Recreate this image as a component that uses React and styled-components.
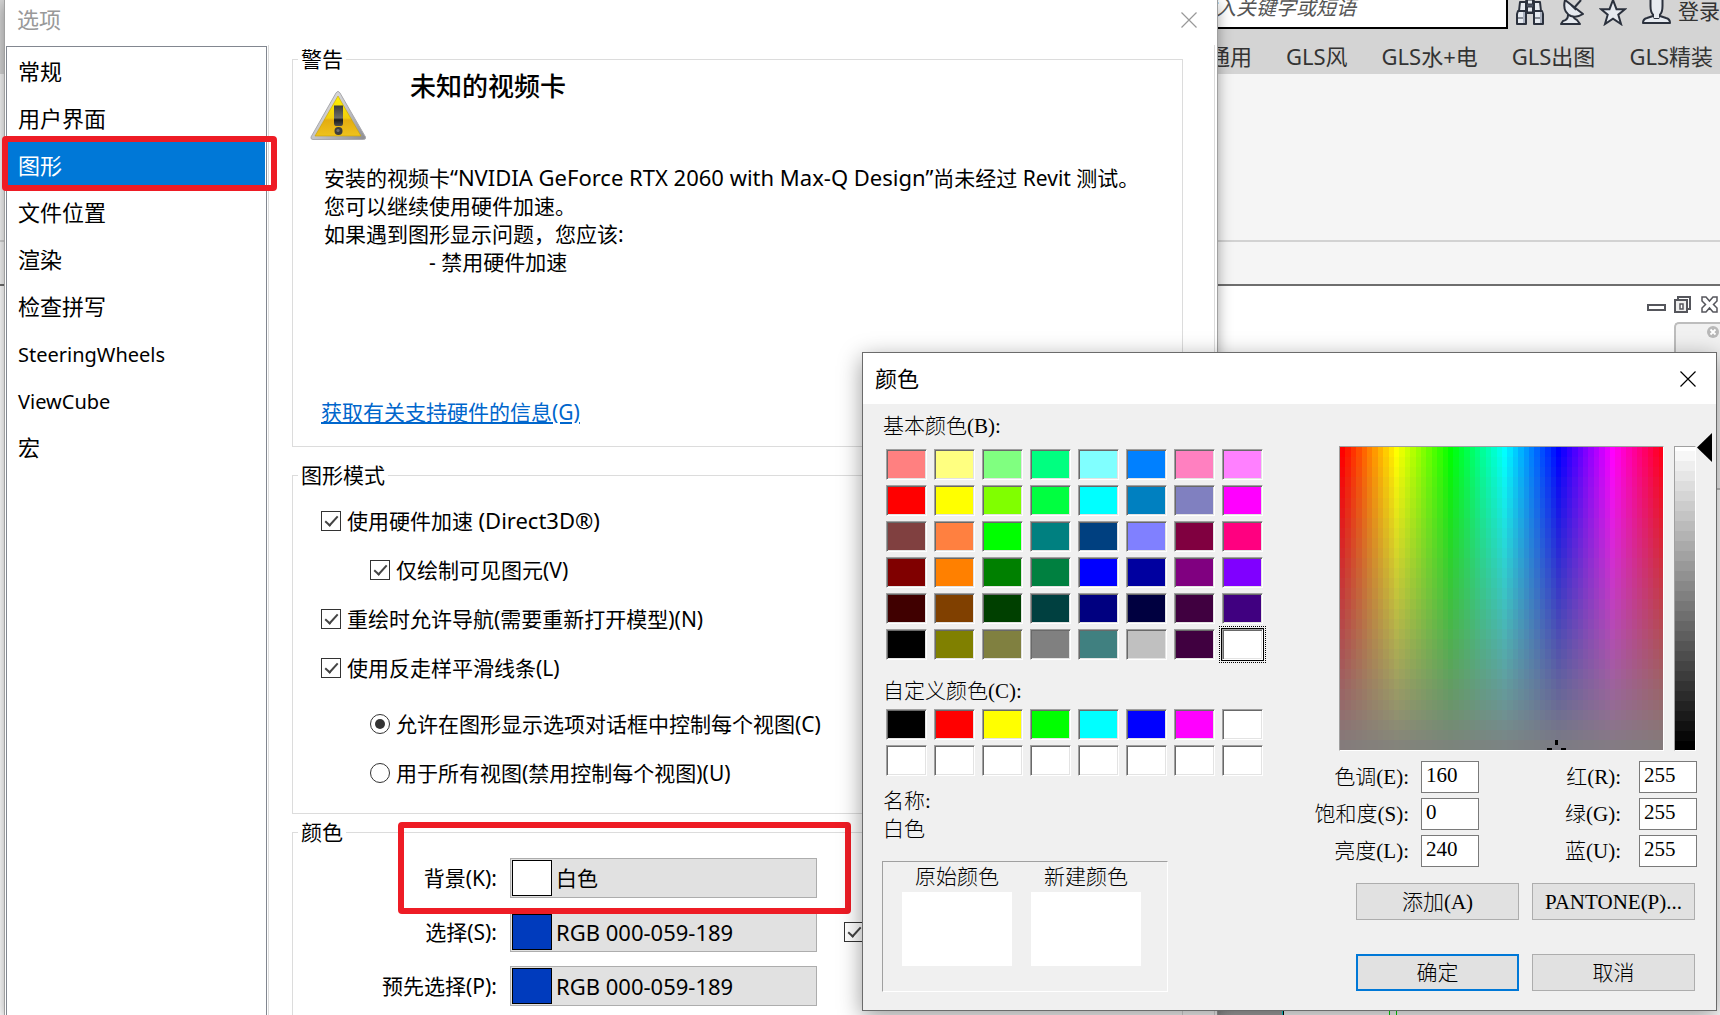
import React, { useState } from "react";
import styled, { createGlobalStyle, css } from "styled-components";

const sans = `"Noto Sans", "Noto Sans CJK SC", sans-serif`;
const serif = `"Liberation Serif", "Noto Sans CJK SC", serif`;

const GlobalStyle = createGlobalStyle`
  *, *::before, *::after { box-sizing: border-box; }
  body { margin: 0; font-family: ${sans}; font-size: 21px; line-height: 28px; color: #000; }
  button, input { font: inherit; color: inherit; margin: 0; padding: 0; }
`;

const Desktop = styled.div`
  position: relative;
  display: flex;
  flex-direction: column;
  height: 100vh;
  overflow: hidden;
  background: #fff;
`;

/* ---------- host application behind the dialogs ---------- */

const TitleStrip = styled.header`
  display: flex;
  flex-direction: column;
  height: 74px;
  background: #d4d4d4;
  color: #333;
`;

const SearchRow = styled.div`
  display: flex;
  justify-content: flex-end;
  align-items: flex-start;
  height: 42px;
  gap: 7px;
`;

const SearchBox = styled.input`
  width: 312px;
  height: 29px;
  padding: 0 0 12px;
  border: solid #000;
  border-width: 0 2px 2px 0;
  background: #fff;
  font-size: 20px;
  font-style: italic;
  &::placeholder { color: #555; opacity: 1; }
`;

const IconBar = styled.div`
  display: flex;
  gap: 14px;
  height: 26px;
`;

const IconButton = styled.button`
  display: flex;
  border: 0;
  background: none;
`;

const SignIn = styled.button`
  height: 22px;
  width: 42px;
  border: 0;
  background: none;
  line-height: 20px;
  white-space: nowrap;
`;

const Tabs = styled.nav`
  display: flex;
  justify-content: flex-end;
  gap: 34px;
  padding-right: 7px;
  font-size: 22px;
  a { color: inherit; text-decoration: none; white-space: nowrap; }
`;

const Ribbon = styled.div`
  height: 168px;
  background: #f5f5f5;
  border-bottom: 2px solid #d2d2d2;
`;

const OptionsBar = styled.div`
  height: 44px;
  background: #f5f5f5;
  border-bottom: 2px solid #6e6e6e;
`;

const ViewArea = styled.main`
  flex: 1;
  display: flex;
  flex-direction: column;
  align-items: flex-end;
`;

const ViewControls = styled.div`
  display: flex;
  align-items: center;
  gap: 6px;
  padding: 8px 2px 8px 0;
`;

const NavPanel = styled.aside`
  display: flex;
  flex-direction: column;
  align-items: flex-end;
  width: 46px;
  height: 168px;
  padding: 2px 1px;
  border: 2px solid #bdbdbd;
  border-right: 0;
  border-radius: 5px 0 0 5px;
  background: #f1f1f1;
`;

const NavHandle = styled.span`
  width: 18px;
  height: 3px;
  margin: 14px 11px 0 0;
  background: #9a9a9a;
`;

const ModelStrip = styled.div`
  display: flex;
  align-self: stretch;
  height: 8px;
  margin-top: auto;
  padding-left: 1217px;
`;

const ModelPart = styled.span`
  width: ${(p) => p.$w}px;
  background: ${(p) => p.$color};
`;

/* ---------- shared parts ---------- */

const CloseButton = styled.button`
  display: flex;
  align-items: center;
  justify-content: center;
  width: 32px;
  height: 32px;
  border: 0;
  background: none;
  color: ${(p) => p.$color};
`;

const Annotation = styled.span`
  position: absolute;
  z-index: 1;
  border: 6px solid #ee1c25;
  border-radius: 4px;
  pointer-events: none;
`;

const Latin = styled.span`
  font-size: 22px;
  line-height: 22px;
`;

/* ---------- options window ---------- */

const OptionsWindow = styled.section`
  position: absolute;
  top: 0;
  bottom: 0;
  left: 5px;
  right: 503px;
  display: flex;
  flex-direction: column;
  background: #fff;
  box-shadow: 0 0 0 1px #a0a0a0, 0 4px 14px rgba(0, 0, 0, 0.4);
`;

const OptionsHeader = styled.header`
  display: flex;
  align-items: center;
  justify-content: space-between;
  height: 45px;
  padding: 0 12px 6px;
  h1 { margin: 0; padding-bottom: 2px; font-size: 22px; font-weight: 400; color: #999; }
`;

const OptionsBody = styled.div`
  flex: 1;
  min-height: 0;
  display: flex;
  padding: 0 2px 0 1px;
`;

const Categories = styled.ul`
  flex: none;
  width: 261px;
  margin: 1px 1px 0 0;
  padding: 1px;
  list-style: none;
  border: 1px solid #828790;
  border-bottom: 0;
  font-size: 22px;
`;

const Category = styled.li`
  position: relative;
`;

const CategoryButton = styled.button`
  width: 100%;
  height: 47px;
  padding: ${(p) => (p.$latin ? "2px 0 0 10px" : "0 0 2px 10px")};
  border: 0;
  text-align: left;
  font-size: ${(p) => (p.$latin ? "20px" : "22px")};
  background: ${(p) => (p.$active ? "#0078d7" : "transparent")};
  color: ${(p) => (p.$active ? "#fff" : "#000")};
`;

const CategoryMark = styled(Annotation)`
  inset: -6px -12px -2px -6px;
`;

const Panel = styled.div`
  flex: 1;
  min-width: 0;
  display: flex;
  flex-direction: column;
  overflow: hidden;
  padding: 0 31px 0 23px;
  border: solid #dcdcdc;
  border-width: 0 1px;
`;

const Group = styled.fieldset`
  min-width: 0;
  margin: 0 0 ${(p) => p.$after || 0}px;
  padding: 0;
  border: 1px solid #dcdcdc;
  legend { margin-left: 5px; padding: 0 3px; height: 28px; }
`;

const WarningHead = styled.div`
  display: flex;
  align-items: flex-start;
  gap: 43px;
  height: 91px;
  padding-left: 17px;
  svg { margin-top: 17px; }
  h2 {
    margin: 1px 0 0;
    font-family: ${serif};
    font-size: 26px;
    font-weight: 500;
    line-height: 28px;
  }
`;

const WarningText = styled.div`
  padding-left: 31px;
  p { margin: 0; }
  p:last-child { padding-left: 105px; }
`;

const HelpLink = styled.a`
  display: inline-block;
  margin: 122px 0 20px 28px;
  color: #0066cc;
  text-underline-offset: 2px;
`;

const Choices = styled.div`
  display: flex;
  flex-direction: column;
  gap: 21px;
  padding: 18px 0 26px 28px;
`;

const Choice = styled.label`
  display: flex;
  align-items: center;
  gap: 6px;
  padding-left: ${(p) => (p.$nested ? 49 : 0)}px;
  margin-top: ${(p) => (p.$spaced ? 7 : 0)}px;
`;

const mark = css`
  appearance: none;
  flex: none;
  display: flex;
  align-items: center;
  justify-content: center;
  width: 20px;
  height: 20px;
  border: 1px solid #333;
  background: #fff;
`;

const CheckBox = styled.input.attrs({ type: "checkbox" })`
  ${mark}
  &:checked::after {
    content: "";
    width: 7px;
    height: 13px;
    margin-top: -4px;
    border: solid #444;
    border-width: 0 2px 2px 0;
    transform: rotate(42deg);
  }
`;

const Radio = styled.input.attrs({ type: "radio" })`
  ${mark}
  border-radius: 50%;
  &:checked::after {
    content: "";
    width: 10px;
    height: 10px;
    border-radius: 50%;
    background: #333;
  }
`;

const ColorRows = styled.div`
  display: flex;
  flex-direction: column;
  gap: 14px;
  padding: 12px 0;
`;

const ColorRow = styled.div`
  position: relative;
  display: grid;
  grid-template-columns: 204px 307px 20px;
  align-items: center;
  column-gap: 13px;
  label { text-align: right; }
  input { margin-left: 14px; }
`;

const ColorButton = styled.button`
  display: flex;
  align-items: center;
  gap: 4px;
  height: 40px;
  padding: 0 1px;
  border: 1px solid #adadad;
  background: #e1e1e1;
`;

const Chip = styled.span`
  width: 40px;
  height: 36px;
  border: 1px solid #000;
  background: ${(p) => p.$color};
`;

const RowMark = styled(Annotation)`
  top: -36px;
  bottom: -16px;
  left: 105px;
  width: 453px;
`;

/* ---------- colour dialog ---------- */

const ColorDialog = styled.section`
  position: absolute;
  top: 352px;
  right: 3px;
  z-index: 2;
  width: 855px;
  border: 1px solid #6b6b6b;
  background: #f0f0f0;
  box-shadow: 0 6px 22px rgba(0, 0, 0, 0.4);
  font-family: ${serif};
  font-weight: 300;
`;

const DialogHeader = styled.header`
  display: flex;
  align-items: center;
  justify-content: space-between;
  height: 51px;
  padding: 0 12px;
  background: #fff;
  font-family: ${sans};
  h1 { margin: 0; padding-bottom: 2px; font-size: 22px; font-weight: 400; }
`;

const DialogBody = styled.form`
  display: flex;
  justify-content: space-between;
  padding: 8px 4px 18px 19px;
`;

const PaletteColumn = styled.div`
  display: flex;
  flex-direction: column;
`;

const Caption = styled.h2`
  margin: 0;
  padding-left: 1px;
  font-size: 21px;
  font-weight: 300;
  line-height: 28px;
`;

const Palette = styled.div`
  display: grid;
  grid-template-columns: repeat(8, 41px);
  grid-auto-rows: 31px;
  gap: 5px 7px;
  margin: ${(p) => p.$before}px 0 ${(p) => p.$after}px 4px;
`;

const Swatch = styled.button`
  position: relative;
  border: 1px solid;
  border-color: #a0a0a0 #fff #fff #a0a0a0;
  background: ${(p) => p.$color};
  box-shadow: inset 1px 1px #696969, inset -1px -1px #e3e3e3
    ${(p) => (p.$selected ? ", 0 0 0 1px #000" : "")};
  outline: ${(p) => (p.$selected ? "1px dotted #000" : "none")};
  outline-offset: 2px;
`;

const ColorName = styled.p`
  margin: 0;
  padding-left: 1px;
`;

const Preview = styled.div`
  display: flex;
  gap: 19px;
  width: 286px;
  height: 131px;
  margin-top: 18px;
  padding: 1px 19px;
  border: 1px solid;
  border-color: #a0a0a0 #fff #fff #a0a0a0;
`;

const Sample = styled.figure`
  width: 110px;
  margin: 0;
  text-align: center;
`;

const SampleFill = styled.div`
  height: 74px;
  margin-top: 1px;
  background: #fff;
`;

const MixColumn = styled.div`
  display: flex;
  flex-direction: column;
  align-items: flex-end;
  padding-top: 34px;
`;

const Spectrum = styled.div`
  display: flex;
  align-items: flex-start;
`;

const Sunken = styled.div`
  height: 305px;
  width: ${(p) => p.$w}px;
  margin-right: ${(p) => p.$after}px;
  border: 1px solid;
  border-color: #a0a0a0 #fff #fff #a0a0a0;
  svg { display: block; width: 100%; height: 100%; }
`;

const Arrow = styled.svg`
  margin-top: -13px;
`;

const Fields = styled.div`
  display: grid;
  grid-template-columns: auto 58px 144px 58px;
  gap: 5px 8px;
  align-items: center;
  margin: 10px 15px 0 0;
`;

const FieldLabel = styled.label`
  padding-right: ${(p) => (p.$wide ? 10 : 4)}px;
  text-align: right;
`;

const Field = styled.input.attrs({ type: "text" })`
  width: 58px;
  height: 32px;
  padding: 0 4px 4px;
  border: 1px solid #7a7a7a;
  background: #fff;
`;

const Buttons = styled.div`
  display: grid;
  grid-template-columns: 163px 163px;
  gap: 34px 13px;
  margin: 16px 17px 0 0;
`;

const PushButton = styled.button`
  height: 37px;
  border: ${(p) => (p.$primary ? "2px solid #0078d7" : "1px solid #adadad")};
  background: #e1e1e1;
  white-space: nowrap;
`;

/* ---------- drawings ---------- */

const Cross = () => (
  <svg width="16" height="16" viewBox="0 0 16 16" aria-hidden="true">
    <path d="M.5.5l15 15M15.5.5l-15 15" stroke="currentColor" strokeWidth="1.2" />
  </svg>
);

const WarningIcon = () => (
  <svg width="57" height="51" viewBox="0 0 57 51" aria-hidden="true">
    <defs>
      <linearGradient id="rim" x1="0" y1="0" x2="1" y2="1">
        <stop offset="0" stopColor="#e8e8e8" />
        <stop offset=".5" stopColor="#c4c4c8" />
        <stop offset="1" stopColor="#8d8d92" />
      </linearGradient>
      <linearGradient id="amber" x1="0" y1="0" x2="0" y2="1">
        <stop offset="0" stopColor="#fff200" />
        <stop offset=".55" stopColor="#f2cf0e" />
        <stop offset=".6" stopColor="#e4ac10" />
        <stop offset="1" stopColor="#eec21c" />
      </linearGradient>
      <linearGradient id="bang" x1="0" y1="0" x2="0" y2="1">
        <stop offset="0" stopColor="#3a3a3a" />
        <stop offset=".6" stopColor="#6d6d66" />
        <stop offset=".7" stopColor="#1b1b1b" />
        <stop offset="1" stopColor="#4c4c4c" />
      </linearGradient>
    </defs>
    <path d="M28 1.500Q29 1.500 30 3L55.500 47Q56 49.500 53.500 49.500H3Q.5 49.500 1 47L26 3Q27 1.500 28 1.500Z" fill="url(#rim)" stroke="#a9a9ad" />
    <path d="M28 6L51 46H5Z" fill="url(#amber)" stroke="#c8a200" strokeWidth=".6" />
    <path d="M24 15.500h9v17.500q0 3-2 3h-5q-2 0-2-3z" fill="url(#bang)" />
    <circle cx="28.500" cy="41" r="4" fill="#3d3d3d" />
    <circle cx="28" cy="40.500" r="1.600" fill="#6e6e6e" />
  </svg>
);

const steel = { stroke: "#2b313d", strokeWidth: 2, strokeLinejoin: "round", fill: "#e6eaf0" };

const Binoculars = () => (
  <svg width="30" height="26" viewBox="0 0 30 26" aria-hidden="true">
    <g {...steel}>
      <path d="M5 2h6v9H4zM19 2h6l1 9h-7z" />
      <path d="M11 1h8v12h-8z" fill="#4c5362" />
      <path d="M12.500 0h5v4h-5zM12.500 7h5v5h-5z" strokeWidth="1" />
      <path d="M3 11h8v13H2V14zM19 11h8l1 3v10h-9z" />
      <path d="M2 18h9M19 18h9" strokeWidth="1" />
      <path d="M8 12h2v11H8zM25 12h2v11h-2z" fill="#aab1bf" stroke="none" />
    </g>
  </svg>
);

const Dish = () => (
  <svg width="26" height="26" viewBox="0 0 26 26" aria-hidden="true">
    <g {...steel}>
      <path d="M9 15q0 5-5 6l-2 3h19l-3-4q-3-1-4-4z" />
      <path d="M6 0Q3 12 12 16q6 2 12-2z" />
      <path d="M15 8l7-8" fill="none" />
      <path d="M12 5l5 5" strokeWidth="1.500" />
    </g>
  </svg>
);

const Star = () => (
  <svg width="28" height="26" viewBox="0 0 28 26" aria-hidden="true">
    <path d="M14 0l3.500 9.200H26l-6.700 5.500L22 24l-8-5.300L6 24l2.700-9.300L2 9.200h8.500z" {...steel} strokeLinejoin="miter" />
  </svg>
);

const User = () => (
  <svg width="30" height="26" viewBox="0 0 30 26" aria-hidden="true">
    <g {...steel}>
      <path d="M2 23q0-4 4-5l6-2h7l6 2q4 1 4 5z" />
      <path d="M9.500-2h12v8q0 7-3 9l-1 3h-4l-1-3q-3-2-3-9z" />
      <path d="M13 13h5v5h-5z" stroke="none" />
    </g>
  </svg>
);

const ViewIcons = () => (
  <svg width="72" height="20" viewBox="0 0 72 20" aria-hidden="true">
    <g fill="#fff" stroke="#55565c" strokeWidth="2">
      <path d="M2 11h17v5H2z" />
      <path d="M32 3h12v12H32z" />
      <path d="M29 6h12v12H29z" fill="#eee" />
      <path d="M34 10h3v5h-3z" strokeWidth="1.500" />
      <path d="M56 3h4l3.500 4L67 3h4v4l-3.500 3.500L71 14v4h-4l-3.500-4L60 18h-4v-4l3.500-3.500L56 7z" strokeWidth="1.500" />
    </g>
  </svg>
);

const NavClose = () => (
  <svg width="12" height="12" viewBox="0 0 12 12" aria-hidden="true">
    <circle cx="6" cy="6" r="6" fill="#b8b8b8" />
    <path d="M3.500 3.500l5 5M8.500 3.500l-5 5" stroke="#fff" strokeWidth="1.800" />
  </svg>
);

const range = (n) => Array.from({ length: n }, (_, i) => i);

const HueField = () => (
  <svg viewBox="0 0 323 303" preserveAspectRatio="none" aria-hidden="true">
    <g shapeRendering="crispEdges">
      {range(30).map((row) =>
        range(60).map((col) => (
          <rect
            key={`${row}-${col}`}
            x={Math.round(col * 5.4)}
            y={Math.round(row * 10.1)}
            width="6"
            height="11"
            fill={`hsl(${col * 6}, ${100 - (row * 100) / 30}%, 50%)`}
          />
        ))
      )}
      <path d="M215 293h3v5h-3zM207 301h5v2h-5zM221 301h5v2h-5z" fill="#000" />
    </g>
  </svg>
);

const LightnessBar = () => (
  <svg viewBox="0 0 20 303" preserveAspectRatio="none" aria-hidden="true">
    <g shapeRendering="crispEdges">
      {range(31).map((i) => (
        <rect
          key={i}
          y={i === 0 ? 0 : i * 10 - 6}
          width="20"
          height="11"
          fill={`hsl(0, 0%, ${100 - (i * 100) / 30}%)`}
        />
      ))}
    </g>
  </svg>
);

/* ---------- data ---------- */

const categories = ["常规", "用户界面", "图形", "文件位置", "渲染", "检查拼写", "SteeringWheels", "ViewCube", "宏"];

const basicColors = [
  "#ff8080", "#ffff80", "#80ff80", "#00ff80", "#80ffff", "#0080ff", "#ff80c0", "#ff80ff",
  "#ff0000", "#ffff00", "#80ff00", "#00ff40", "#00ffff", "#0080c0", "#8080c0", "#ff00ff",
  "#804040", "#ff8040", "#00ff00", "#008080", "#004080", "#8080ff", "#800040", "#ff0080",
  "#800000", "#ff8000", "#008000", "#008040", "#0000ff", "#0000a0", "#800080", "#8000ff",
  "#400000", "#804000", "#004000", "#004040", "#000080", "#000040", "#400040", "#400080",
  "#000000", "#808000", "#808040", "#808080", "#408080", "#c0c0c0", "#400040", "#ffffff",
];

const customColors = [
  "#000000", "#ff0000", "#ffff00", "#00ff00", "#00ffff", "#0000ff", "#ff00ff", "#ffffff",
  ...range(8).map(() => "#ffffff"),
];

const fields = [
  ["色调(E):", "160", "红(R):", "255"],
  ["饱和度(S):", "0", "绿(G):", "255"],
  ["亮度(L):", "240", "蓝(U):", "255"],
];

const colorRows = [
  { id: "background", label: "背景(K):", text: "白色", color: "#fff", marked: true },
  { id: "selection", label: "选择(S):", text: <Latin>RGB 000-059-189</Latin>, color: "#003bbd", check: true },
  { id: "preselection", label: "预先选择(P):", text: <Latin>RGB 000-059-189</Latin>, color: "#003bbd" },
];

/* ---------- page ---------- */

function HostApp() {
  return (
    <>
      <TitleStrip>
        <SearchRow>
          <SearchBox type="text" placeholder="键入关键字或短语" aria-label="搜索" />
          <IconBar>
            <IconButton type="button" aria-label="查找"><Binoculars /></IconButton>
            <IconButton type="button" aria-label="通讯"><Dish /></IconButton>
            <IconButton type="button" aria-label="收藏"><Star /></IconButton>
            <IconButton type="button" aria-label="用户"><User /></IconButton>
          </IconBar>
          <SignIn type="button">登录</SignIn>
        </SearchRow>
        <Tabs>
          {["通用", "GLS风", "GLS水+电", "GLS出图", "GLS精装"].map((t) => (
            <a key={t} href="#tab">{t}</a>
          ))}
        </Tabs>
      </TitleStrip>
      <Ribbon />
      <OptionsBar />
      <ViewArea>
        <ViewControls><ViewIcons /></ViewControls>
        <NavPanel>
          <NavClose />
          <NavHandle />
        </NavPanel>
        <ModelStrip>
          <ModelPart $w={65} $color="#a6a6a6" />
          <ModelPart $w={1} $color="#00d8d8" />
          <ModelPart $w={1} $color="#000" />
          <ModelPart $w={105} $color="transparent" />
          <ModelPart $w={1} $color="#00e000" />
          <ModelPart $w={6} $color="transparent" />
          <ModelPart $w={1} $color="#00e000" />
        </ModelStrip>
      </ViewArea>
    </>
  );
}

function Options() {
  const [active, setActive] = useState("图形");
  return (
    <OptionsWindow>
      <OptionsHeader>
        <h1>选项</h1>
        <CloseButton type="button" aria-label="关闭" $color="#999"><Cross /></CloseButton>
      </OptionsHeader>
      <OptionsBody>
        <Categories>
          {categories.map((name) => (
            <Category key={name}>
              <CategoryButton
                type="button"
                $active={name === active}
                $latin={/^[A-Z]/.test(name)}
                onClick={() => setActive(name)}
              >
                {name}
              </CategoryButton>
              {name === "图形" && <CategoryMark />}
            </Category>
          ))}
        </Categories>
        <Panel>
          <Group $after={14}>
            <legend>警告</legend>
            <WarningHead>
              <WarningIcon />
              <h2>未知的视频卡</h2>
            </WarningHead>
            <WarningText>
              <p>
                安装的视频卡<Latin>“NVIDIA GeForce RTX 2060 with Max-Q Design”</Latin>尚未经过 Revit 测试。
              </p>
              <p>您可以继续使用硬件加速。</p>
              <p>如果遇到图形显示问题，您应该:</p>
              <p>- 禁用硬件加速</p>
            </WarningText>
            <HelpLink href="#hardware">获取有关支持硬件的信息(G)</HelpLink>
          </Group>
          <Group $after={4}>
            <legend>图形模式</legend>
            <Choices>
              <Choice><CheckBox defaultChecked /><span>使用硬件加速 <Latin>(Direct3D®)</Latin></span></Choice>
              <Choice $nested><CheckBox defaultChecked />仅绘制可见图元(V)</Choice>
              <Choice><CheckBox defaultChecked />重绘时允许导航(需要重新打开模型)(N)</Choice>
              <Choice><CheckBox defaultChecked />使用反走样平滑线条(L)</Choice>
              <Choice $nested $spaced><Radio name="smooth" defaultChecked />允许在图形显示选项对话框中控制每个视图(C)</Choice>
              <Choice $nested><Radio name="smooth" />用于所有视图(禁用控制每个视图)(U)</Choice>
            </Choices>
          </Group>
          <Group>
            <legend>颜色</legend>
            <ColorRows>
              {colorRows.map((row) => (
                <ColorRow key={row.id}>
                  <label htmlFor={row.id}>{row.label}</label>
                  <ColorButton type="button" id={row.id}>
                    <Chip $color={row.color} />
                    {row.text}
                  </ColorButton>
                  {row.check && <CheckBox defaultChecked aria-label="半透明" />}
                  {row.marked && <RowMark />}
                </ColorRow>
              ))}
            </ColorRows>
          </Group>
        </Panel>
      </OptionsBody>
    </OptionsWindow>
  );
}

function Colors() {
  return (
    <ColorDialog>
      <DialogHeader>
        <h1>颜色</h1>
        <CloseButton type="button" aria-label="关闭" $color="#000"><Cross /></CloseButton>
      </DialogHeader>
      <DialogBody onSubmit={(e) => e.preventDefault()}>
        <PaletteColumn>
          <Caption>基本颜色(B):</Caption>
          <Palette $before={9} $after={17}>
            {basicColors.map((c, i) => (
              <Swatch key={i} type="button" aria-label={c} $color={c} $selected={i === 47} />
            ))}
          </Palette>
          <Caption>自定义颜色(C):</Caption>
          <Palette $before={4} $after={11}>
            {customColors.map((c, i) => (
              <Swatch key={i} type="button" aria-label={c} $color={c} />
            ))}
          </Palette>
          <ColorName>名称:</ColorName>
          <ColorName>白色</ColorName>
          <Preview>
            <Sample>
              <figcaption>原始颜色</figcaption>
              <SampleFill />
            </Sample>
            <Sample>
              <figcaption>新建颜色</figcaption>
              <SampleFill />
            </Sample>
          </Preview>
        </PaletteColumn>
        <MixColumn>
          <Spectrum>
            <Sunken $w={325} $after={10}><HueField /></Sunken>
            <Sunken $w={22} $after={1}><LightnessBar /></Sunken>
            <Arrow width="15" height="29" viewBox="0 0 15 29" aria-hidden="true">
              <path d="M0 14.500L15 0v29z" />
            </Arrow>
          </Spectrum>
          <Fields>
            {fields.map(([a, av, b, bv]) => (
              <React.Fragment key={a}>
                <FieldLabel htmlFor={a}>{a}</FieldLabel>
                <Field id={a} defaultValue={av} />
                <FieldLabel $wide htmlFor={b}>{b}</FieldLabel>
                <Field id={b} defaultValue={bv} />
              </React.Fragment>
            ))}
          </Fields>
          <Buttons>
            <PushButton type="button">添加(A)</PushButton>
            <PushButton type="button">PANTONE(P)...</PushButton>
            <PushButton type="submit" $primary>确定</PushButton>
            <PushButton type="button">取消</PushButton>
          </Buttons>
        </MixColumn>
      </DialogBody>
    </ColorDialog>
  );
}

export default function App() {
  return (
    <Desktop>
      <GlobalStyle />
      <HostApp />
      <Options />
      <Colors />
    </Desktop>
  );
}
